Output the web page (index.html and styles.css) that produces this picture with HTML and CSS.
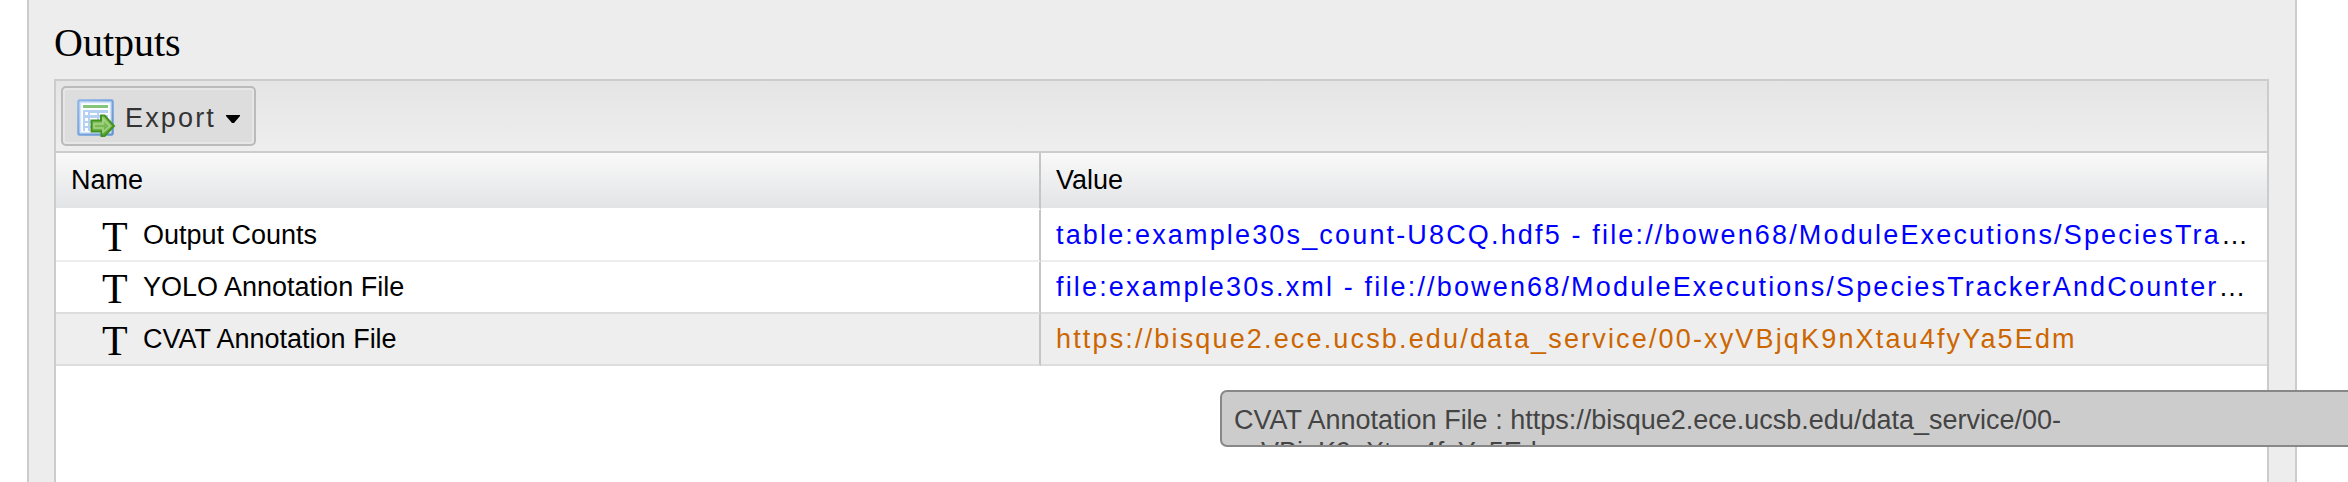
FILE: index.html
```html
<!DOCTYPE html>
<html lang="en">
<head>
<meta charset="utf-8">
<title>Outputs</title>
<link rel="stylesheet" href="styles.css">
</head>
<body>
<main class="panel">
  <h1 class="title">Outputs</h1>
  <section class="grid">
    <div class="toolbar">
      <button class="export" type="button">
        <svg class="export-icon" viewBox="0 0 40 40" aria-hidden="true">
          <defs>
            <linearGradient id="sheet" x1="0" y1="0" x2="1" y2="1">
              <stop offset="0" stop-color="#8bb5e9"/>
              <stop offset="1" stop-color="#6594d2"/>
            </linearGradient>
            <linearGradient id="arrow" x1="0" y1="0" x2="0" y2="1">
              <stop offset="0" stop-color="#9acb70"/>
              <stop offset="1" stop-color="#5ba63a"/>
            </linearGradient>
          </defs>
          <rect x="2.500" y="2.500" width="34" height="34" rx="1" fill="#fff" stroke="url(#sheet)" stroke-width="2.500"/>
          <rect x="4.500" y="4.500" width="30" height="30" fill="none" stroke="#d3e4f8" stroke-width="1.500"/>
          <path d="M7 8.500H32" stroke="#84c47b" stroke-width="3"/>
          <rect x="7" y="12" width="25" height="21" fill="#b4d0f3"/>
          <path d="M9 14h3v3H9zM9 20h3v3H9zM9 25h3v3H9zM9 30h3v3H9zM14 15h7v2h-7zM23 15h9v2h-9zM14 20h7v3h-7zM23 20h9v3h-9zM14 25h7v3h-7zM14 30h7v3h-7zM23 25h9v8h-9z" fill="#fff"/>
          <path d="M15.500 22.500H25v-5h3.500L38 28l-9.500 10H25.500V33.500h-10z" fill="url(#arrow)" stroke="#429321" stroke-width="2"/>
          <path d="M18 26h9v-5l7 7-7 6v-4h-9z" fill="none" stroke="#a7d486" stroke-width="1.500"/>
        </svg>
        <span>Export</span>
        <svg class="caret" viewBox="0 0 14 8" aria-hidden="true"><path d="M0 0H14V1L8 8H6L0 1z"/></svg>
      </button>
    </div>
    <table class="outputs">
      <colgroup><col class="col-name"><col></colgroup>
      <thead>
        <tr><th scope="col">Name</th><th scope="col">Value</th></tr>
      </thead>
      <tbody>
        <tr>
          <td><span class="name"><span class="type" aria-hidden="true">T</span>Output Counts</span></td>
          <td class="value"><a href="#counts">table:example30s_count-U8CQ.hdf5 - file://bowen68/ModuleExecutions/SpeciesTrackerAndCounter/example30s_count.hdf5</a></td>
        </tr>
        <tr>
          <td><span class="name"><span class="type" aria-hidden="true">T</span>YOLO Annotation File</span></td>
          <td class="value"><a href="#yolo">file:example30s.xml - file://bowen68/ModuleExecutions/SpeciesTrackerAndCounter/example30s.xml</a></td>
        </tr>
        <tr class="active">
          <td><span class="name"><span class="type" aria-hidden="true">T</span>CVAT Annotation File</span></td>
          <td class="value"><a href="#cvat">https://bisque2.ece.ucsb.edu/data_service/00-xyVBjqK9nXtau4fyYa5Edm</a></td>
        </tr>
      </tbody>
    </table>
    <div class="tooltip" role="tooltip">CVAT Annotation File : https://bisque2.ece.ucsb.edu/data_service/00-<br>xyVBjqK9nXtau4fyYa5Edm</div>
  </section>
</main>
</body>
</html>
```
FILE: styles.css
```css
* {
  box-sizing: border-box;
}

body {
  margin: 0;
  overflow: hidden;
  background: #fff;
  color: #000;
  font: 27px/32px "Liberation Sans", Arial, sans-serif;
}

.panel {
  display: flex;
  flex-direction: column;
  min-height: 100vh;
  margin: 0 51px 0 27px;
  padding: 20px 26px 0 25px;
  border: solid #ccc;
  border-width: 0 2px;
  background: #ededed;
}

.title {
  margin: 0 0 13px;
  font: 40px/46px "Liberation Serif", "Times New Roman", serif;
}

.grid {
  position: relative;
  flex: 1;
  border: 2px solid #ccc;
  border-bottom: 0;
  background: #fff;
}

.toolbar {
  display: flex;
  padding: 5px;
  border-bottom: 2px solid #ccc;
  background: linear-gradient(#e5e5e5, #eee);
}

.export {
  display: flex;
  align-items: center;
  height: 60px;
  padding: 3px 14px 0 13px;
  border: 2px solid #bbb;
  border-radius: 5px;
  background: #ddd;
  box-shadow: inset 0 0 0 2px #e7e7e7;
  color: #333;
  font: inherit;
  letter-spacing: 0.08em;
}

.export-icon {
  width: 40px;
  height: 40px;
  margin: 0 9px 0 0;
}

.caret {
  width: 14px;
  height: 8px;
  margin: 3px 0 0 10px;
}

.outputs {
  width: 100%;
  table-layout: fixed;
  border-collapse: separate;
  border-spacing: 0;
}

.col-name {
  width: 44.55%;
}

.outputs th {
  height: 57px;
  padding: 0 15px 2px;
  border-bottom: 2px solid #fff;
  background: linear-gradient(#f9f9f9, #e3e4e6) padding-box;
  font-weight: normal;
  text-align: left;
}

.outputs td {
  height: 52px;
  padding: 0 15px;
  border-bottom: 2px solid #ededed;
}

.outputs th:first-child,
.outputs td:first-child {
  border-right: 2px solid #c5c5c5;
}

.outputs tr:nth-child(2) td,
.outputs .active td {
  border-bottom-color: #ddd;
}

.active {
  background: #eee;
}

.name {
  display: flex;
  align-items: center;
  padding-left: 31px;
}

.type {
  width: 41px;
  padding-top: 3px;
  font: 42px/32px "Liberation Serif", "Times New Roman", serif;
}

.value {
  overflow: hidden;
  letter-spacing: 0.08em;
  text-overflow: ellipsis;
  white-space: nowrap;
}

.value a {
  color: #00f;
  text-decoration: none;
}

.active .value a {
  color: #c60;
}

.tooltip {
  position: absolute;
  top: 309px;
  left: 1164px;
  width: 1200px;
  height: 57px;
  padding: 12px;
  overflow: hidden;
  border: 2px solid #888;
  border-radius: 7px;
  background: #ccc;
  color: #444;
}
```
